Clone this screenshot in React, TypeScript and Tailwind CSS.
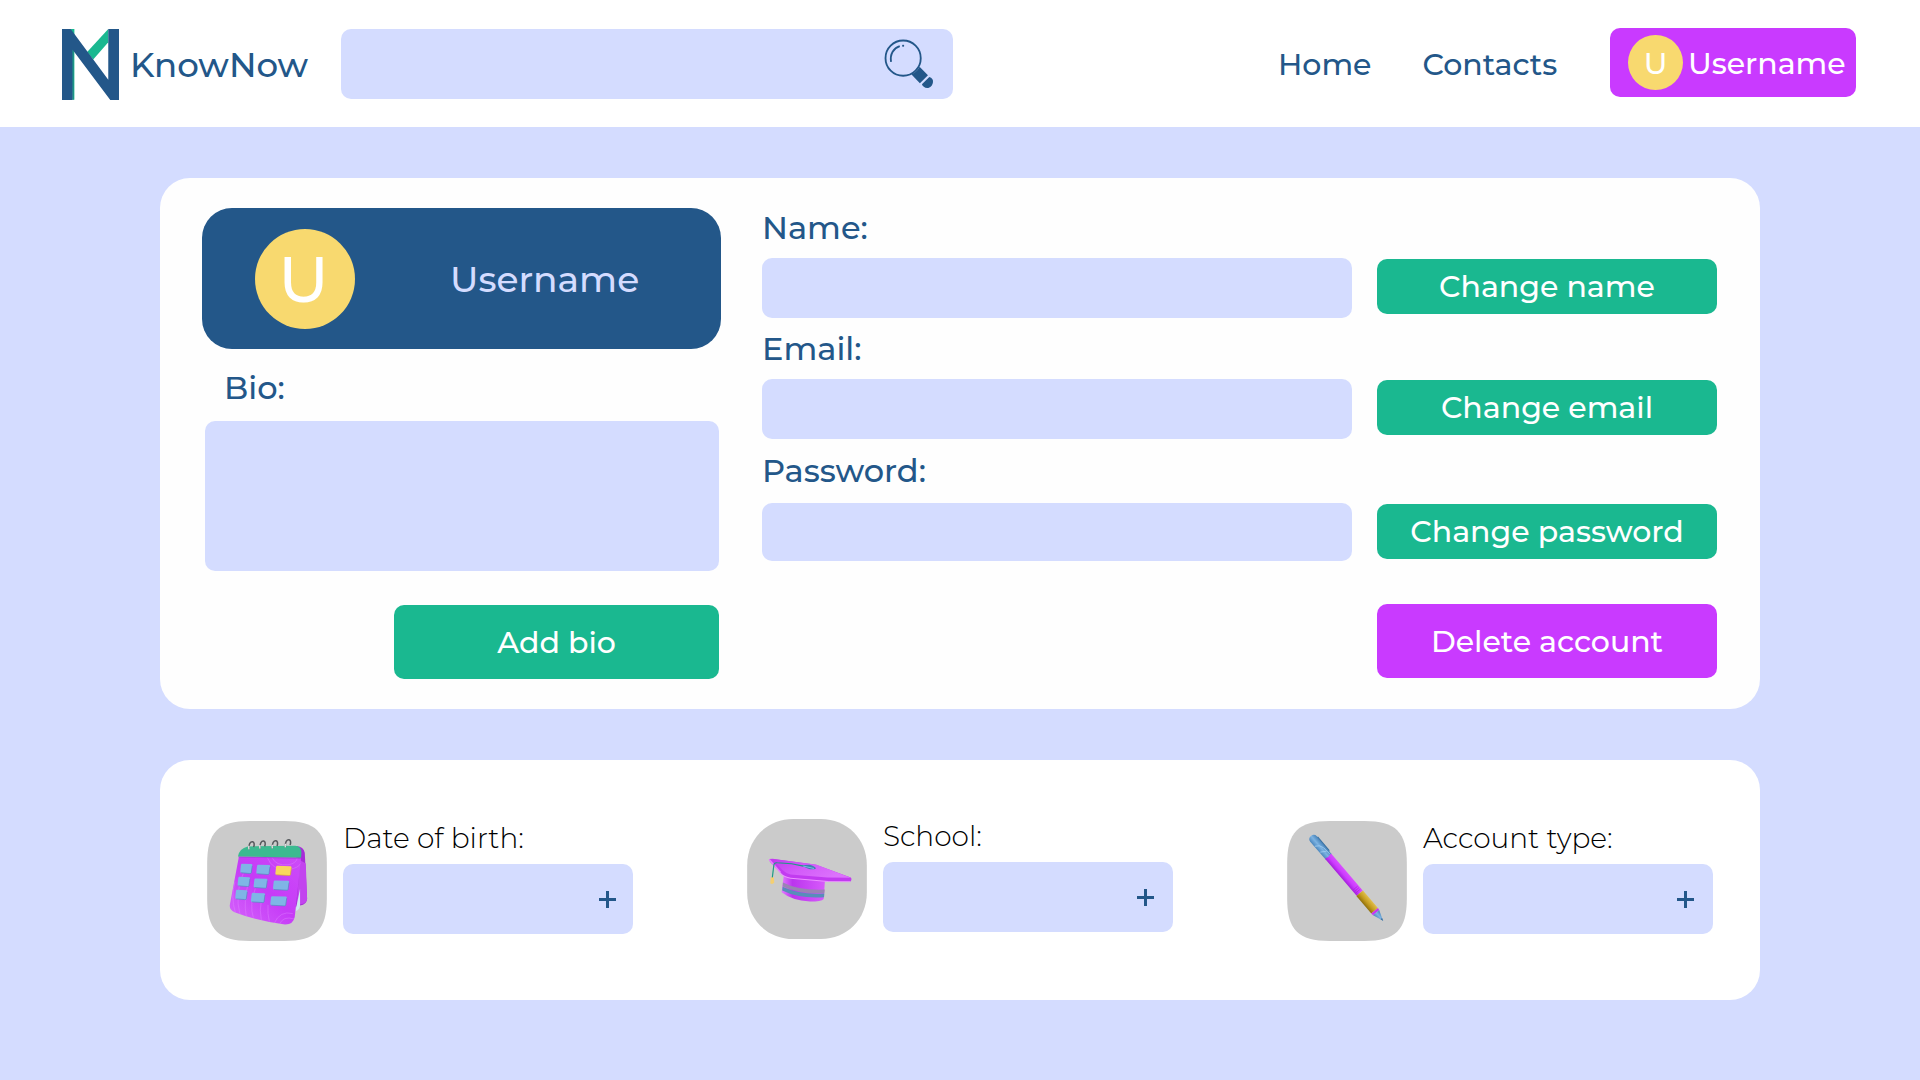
import React from "react";

function Logo() {
  return (
    <svg viewBox="67 58 170 214" className="mt-[29px] ml-[62px] h-[71px] w-[57px] shrink-0" preserveAspectRatio="none">
      <path d="M93 58H104V271H98Z" fill="#1ab890" />
      <path d="M98 118H101.500V271H98Z" fill="#20797f" />
      <path d="M205 58V98L160 150L142 127Z" fill="#1ab890" />
      <path d="M67 58H93L205 211V58H237V272H211L98 120V272H67Z" fill="#235789" />
    </svg>
  );
}

function SearchIcon() {
  return (
    <svg viewBox="130 85 155 155" className="mt-[9px] mr-[18px] h-[52px] w-[52px]" fill="none">
      <circle cx="190" cy="145" r="52.500" stroke="#235789" strokeWidth="5.500" />
      <path d="M154 156C150 132 162 115 180 109" stroke="#235789" strokeWidth="5.500" />
      <rect x="187" y="105" width="6" height="6" rx="2" fill="#235789" />
      <path d="M239 171L264 196L240 220L215 194C224 190 235 180 239 171Z" fill="#235789" />
      <path d="M246 223L268 201C276 203 280 209 279 216C278 226 271 234 262 234C254 234 248 229 246 223Z" fill="#235789" />
    </svg>
  );
}

function PlusIcon({ className }: { className: string }) {
  return (
    <svg viewBox="0 0 17 17" className={`h-[17px] w-[17px] ${className}`}>
      <path d="M8.500 0V17M0 8.500H17" stroke="#235789" strokeWidth="3" />
    </svg>
  );
}

const TILE = "M22 160C22 66 55 33 149 33H253C347 33 380 66 380 160V265C380 359 347 392 253 392H149C55 392 22 359 22 265Z";
const ROUND_TILE = "M22 165C22 86 81 27 160 27H242C321 27 380 86 380 165V248C380 327 321 386 242 386H160C81 386 22 327 22 248Z";

function CalendarIcon() {
  const cells: [number, number, number, string][] = [
    [121, 161, 36, "#7fb5e6"], [169, 164, 41, "#7fb5e6"], [226, 167, 48, "#f9d65e"],
    [113, 200, 37, "#7fb5e6"], [161, 205, 41, "#7fb5e6"], [219, 211, 48, "#7fb5e6"],
    [106, 239, 36, "#7fb5e6"], [153, 248, 42, "#7fb5e6"], [211, 258, 49, "#7fb5e6"],
  ];
  return (
    <svg viewBox="22 33 358 359" className="h-[120px] w-[120px] shrink-0">
      <defs>
        <linearGradient id="calBody" x1="0" y1="1" x2="1" y2="0">
          <stop offset="0" stopColor="#d566fb" />
          <stop offset="0.500" stopColor="#c63cf7" />
          <stop offset="1" stopColor="#cd4cf8" />
        </linearGradient>
        <clipPath id="calClip">
          <path d="M117 139L303 142L284 320Q279 345 250 342Q165 330 104 306Q87 299 90 283Z" />
        </clipPath>
      </defs>
      <path d={TILE} fill="#cbcbcb" />
      <path d="M290 108Q310 110 314 128L321 265Q320 284 300 286L284 290Z" fill="#a82bd8" />
      <path d="M299 150L317 160L321 266Q320 279 301 282L290 290Z" fill="#c244ee" />
      <path d="M300 236L300 286Q298 300 286 303Z" fill="#cfe6ee" />
      <path d="M117 139L303 142L284 320Q279 345 250 342Q165 330 104 306Q87 299 90 283Z" fill="url(#calBody)" />
      <g clipPath="url(#calClip)" fill="none" stroke="#e28bff" strokeWidth="2.500" opacity="0.450">
        <path d="M216 142Q228 168 264 164Q290 160 292 142" />
        <path d="M202 142Q216 182 266 178Q296 174 303 158" />
        <path d="M105 215Q92 260 106 306" />
        <path d="M130 190Q104 250 120 312" />
        <path d="M146 216Q130 270 139 318" />
        <path d="M166 235Q148 285 160 322" />
        <path d="M184 270Q178 300 184 330" />
        <path d="M204 284Q202 310 208 334" />
        <path d="M222 340Q240 300 278 310" />
        <path d="M238 342Q250 316 282 326" />
      </g>
      <path d="M114 139Q118 115 143 109L285 107Q304 108 304 128L303 143Z" fill="#3cba90" />
      <path d="M116 139L303 142L302 147L116 142Z" fill="#8e43c5" opacity="0.500" />
      {cells.map(([x, y, w, fill], i) => (
        <g key={i}>
          <path d={`M${x + 5} ${y}L${x + w - 2} ${y + 1}Q${x + w + 1} ${y + 2} ${x + w} ${y + 6}L${x + w - 3} ${y + 27}Q${x + w - 4} ${y + 30} ${x + w - 8} ${y + 29}L${x + 3} ${y + 27}Q${x - 1} ${y + 26} ${x} ${y + 22}L${x + 2} ${y + 4}Q${x + 3} ${y} ${x + 5} ${y}Z`} fill={fill} />
          <path d={`M${x + w} ${y + 6}L${x + w - 3} ${y + 27}Q${x + w - 4} ${y + 30} ${x + w - 8} ${y + 29}L${x + 3} ${y + 27}`} fill="none" stroke={fill === "#f9d65e" ? "#d6a62f" : "#5387bd"} strokeWidth="2" />
        </g>
      ))}
      <g fill="none" strokeWidth="4">
        {[[154, 104], [187, 102], [224, 101], [263, 98]].map(([x, y]) => (
          <g key={x}>
            <path d={`M${x - 7} ${y + 14}C${x - 9} ${y - 2} ${x - 2} ${y - 10} ${x + 4} ${y - 9}C${x + 9} ${y - 8} ${x + 10} ${y} ${x + 7} ${y + 7}`} stroke="#55585c" strokeWidth="4.500" />
            <path d={`M${x - 7} ${y + 14}C${x - 8} ${y + 9} ${x - 8} ${y + 6} ${x - 7} ${y + 3}`} stroke="#e9eaec" strokeWidth="4" />
          </g>
        ))}
      </g>
    </svg>
  );
}

function CapIcon() {
  return (
    <svg viewBox="22 27 358 359" className="h-[120px] w-[120px] shrink-0">
      <defs>
        <linearGradient id="capBase" x1="0" y1="0" x2="1" y2="0">
          <stop offset="0" stopColor="#e27bff" />
          <stop offset="0.250" stopColor="#bb35ee" />
          <stop offset="1" stopColor="#d75bfb" />
        </linearGradient>
        <linearGradient id="capTop" x1="0" y1="0" x2="1" y2="0.400">
          <stop offset="0" stopColor="#c33af0" />
          <stop offset="0.500" stopColor="#d35cf9" />
          <stop offset="1" stopColor="#dc72fc" />
        </linearGradient>
      </defs>
      <path d={ROUND_TILE} fill="#cbcbcb" />
      <path d="M132 192L255 204L251 266Q244 274 210 274Q155 270 125 246Z" fill="url(#capBase)" />
      <path d="M129 217Q175 241 254 238L253 249Q180 252 128 229Z" fill="#9a83b4" />
      <path d="M128 230Q180 255 253 250L252 261Q178 266 127 241Z" fill="#588dba" />
      <path d="M88 147L98 146L228 164L332 202Q337 208 330 215L264 214L150 204Q134 202 122 188L90 155Z" fill="#c23bf0" />
      <path d="M98 147L228 163L332 203L262 202L152 193Q138 190 126 178Z" fill="url(#capTop)" />
      <path d="M120 189Q134 202 152 204L264 214L330 215" fill="none" stroke="#ec94ff" strokeWidth="3" />
      <path d="M88 148L122 187" stroke="#ea82ff" strokeWidth="4" />
      <path d="M182 165L208 164Q226 169 228 175Q218 180 203 175Z" fill="#417fb0" />
      <path d="M186 167L222 175" stroke="#77b9dc" strokeWidth="3" />
      <path d="M97 204L102 164Q103 157 112 158L155 161L190 168" fill="none" stroke="#1b9d82" strokeWidth="3.500" />
      <path d="M93 201L102 202L103 218Q97 224 91 219Z" fill="#f4cf72" />
    </svg>
  );
}

function PenIcon() {
  return (
    <svg viewBox="22 33 358 359" className="h-[120px] w-[120px] shrink-0">
      <defs>
        <linearGradient id="penBlue" x1="0" y1="1" x2="0" y2="0">
          <stop offset="0" stopColor="#4a86bd" />
          <stop offset="0.500" stopColor="#7db3e2" />
          <stop offset="1" stopColor="#4682b8" />
        </linearGradient>
        <linearGradient id="penPurple" x1="0" y1="1" x2="0" y2="0">
          <stop offset="0" stopColor="#a61edc" />
          <stop offset="0.500" stopColor="#cc3cff" />
          <stop offset="1" stopColor="#d94eff" />
        </linearGradient>
        <linearGradient id="penGold" x1="0" y1="1" x2="0" y2="0">
          <stop offset="0" stopColor="#8f6f0c" />
          <stop offset="0.450" stopColor="#c39b1e" />
          <stop offset="1" stopColor="#e1bf4c" />
        </linearGradient>
      </defs>
      <path d={TILE} fill="#cbcbcb" />
      <g transform="translate(95 80) rotate(49.600)">
        <path d="M12 -15L62 -15Q68 -15 68 -11L62 -9H12Z" fill="#376f9f" />
        <path d="M9 -13L80 -12V12L9 13Q-3 12 -3 0Q-3 -12 9 -13Z" fill="url(#penBlue)" />
        <path d="M28 11Q34 -3 48 -6L74 -8M52 10L62 -6" stroke="#9ecbf0" strokeWidth="2.500" fill="none" />
        <path d="M76 -12H222V12H76Q80 0 76 -12Z" fill="url(#penPurple)" />
        <path d="M202 -9V9M208 -9V9M214 -9V9" stroke="#a722db" strokeWidth="2" />
        <path d="M222 -13H291V13H222Z" fill="url(#penGold)" />
        <path d="M291 -13L298 -12V12L291 13Z" fill="#c735f4" />
        <path d="M298 -12L330 0L298 12Z" fill="url(#penBlue)" />
        <path d="M322 -3L331 0L322 3Z" fill="#386b99" />
      </g>
    </svg>
  );
}

function Label({ className, children }: { className: string; children: React.ReactNode }) {
  return <span className={`block w-max whitespace-nowrap ${className}`}>{children}</span>;
}

function ActionButton({ className, children }: { className: string; children: React.ReactNode }) {
  return (
    <button className={`flex items-center justify-center rounded-[10px] text-[30px] leading-[40px] font-medium whitespace-nowrap text-white ${className}`}>
      {children}
    </button>
  );
}

function InfoItem({ icon, label, plusClass, className }: { icon: React.ReactNode; label: string; plusClass: string; className: string }) {
  return (
    <div className={`flex w-[540px] shrink-0 ${className}`}>
      {icon}
      <div className="ml-4">
        <Label className="h-[43px] text-[28px] leading-[35px] font-light text-black">{label}</Label>
        <div className="flex h-[70px] w-[290px] items-center justify-end rounded-[10px] bg-[#d4dcff]">
          <PlusIcon className={plusClass} />
        </div>
      </div>
    </div>
  );
}

export default function App() {
  return (
    <div className="h-[1080px] w-[1920px] overflow-hidden bg-[#d4dcff] font-['Montserrat','Inter',sans-serif] text-[#235789]">
      <header className="flex h-[127px] items-start bg-white">
        <Logo />
        <div className="ml-[11px] w-[211px] shrink-0">
          <Label className="mt-[45px] text-[34px] leading-[40px] font-medium">KnowNow</Label>
        </div>
        <div className="mt-[29px] flex h-[70px] w-[612px] shrink-0 justify-end rounded-[10px] bg-[#d4dcff]">
          <SearchIcon />
        </div>
        <nav className="mt-[45px] flex text-[30px] leading-[40px] font-medium">
          <Label className="ml-[325px]">Home</Label>
          <Label className="ml-[51px]">Contacts</Label>
        </nav>
        <button className="ml-auto mt-[28px] mr-[64px] flex h-[69px] w-[246px] shrink-0 items-start rounded-[10px] bg-[#c93aff] pl-[18px] font-medium text-white">
          <span className="mt-[7px] flex size-[55px] shrink-0 items-center justify-center rounded-full bg-[#f8d96f] text-[30px] leading-[40px]">
            <span className="block pt-[3px]">U</span>
          </span>
          <Label className="mt-[16px] ml-[5px] text-[30px] leading-[40px]">Username</Label>
        </button>
      </header>

      <main className="px-40 pt-[51px]">
        <section className="flex h-[531px] rounded-[30px] bg-[#fefefe] pt-[30px] pl-[42px]">
          <div className="w-[519px]">
            <div className="flex h-[141px] items-center rounded-[30px] bg-[#235789]">
              <div className="ml-[53px] flex size-[100px] items-center justify-center rounded-full bg-[#f8d96f] text-[64px] leading-[70px] font-medium text-white">
                <span className="block pr-[3px]">U</span>
              </div>
              <Label className="ml-[95px] text-[36px] leading-[40px] font-medium text-[#d4dcff]">Username</Label>
            </div>
            <Label className="mt-[19px] ml-[22px] h-[53px] text-[32px] leading-[40px] font-medium">Bio:</Label>
            <div className="ml-[3px] h-[150px] w-[514px] rounded-[10px] bg-[#d4dcff]" />
            <ActionButton className="mt-[34px] ml-[192px] h-[74px] w-[325px] bg-[#1ab890] pt-[2px]">Add bio</ActionButton>
          </div>

          <div className="ml-[41px] w-[590px]">
            <Label className="h-[49.500px] text-[32px] leading-[40px] font-medium">Name:</Label>
            <div className="h-[60.500px] rounded-[10px] bg-[#d4dcff]" />
            <Label className="mt-[11px] h-[50px] text-[32px] leading-[40px] font-medium">Email:</Label>
            <div className="h-[60px] rounded-[10px] bg-[#d4dcff]" />
            <Label className="mt-[12px] h-[52px] text-[32px] leading-[40px] font-medium">Password:</Label>
            <div className="h-[58px] rounded-[10px] bg-[#d4dcff]" />
          </div>

          <div className="ml-[25px] w-[340px] pt-[50.500px]">
            <ActionButton className="h-[55px] w-full bg-[#1ab890] pt-px">Change name</ActionButton>
            <ActionButton className="mt-[66px] h-[55px] w-full bg-[#1ab890] pt-px">Change email</ActionButton>
            <ActionButton className="mt-[69px] h-[55px] w-full bg-[#1ab890] pt-px">Change password</ActionButton>
            <ActionButton className="mt-[45.500px] h-[74px] w-full bg-[#c93aff] pt-px">Delete account</ActionButton>
          </div>
        </section>

        <section className="mt-[51px] flex h-[240px] rounded-[30px] bg-white pl-[47px]">
          <InfoItem className="pt-[61px]" icon={<CalendarIcon />} label="Date of birth:" plusClass="mr-[17px]" />
          <InfoItem className="pt-[59px]" icon={<CapIcon />} label="School:" plusClass="mr-[19px]" />
          <InfoItem className="pt-[61px]" icon={<PenIcon />} label="Account type:" plusClass="mr-[19px]" />
        </section>
      </main>
    </div>
  );
}
